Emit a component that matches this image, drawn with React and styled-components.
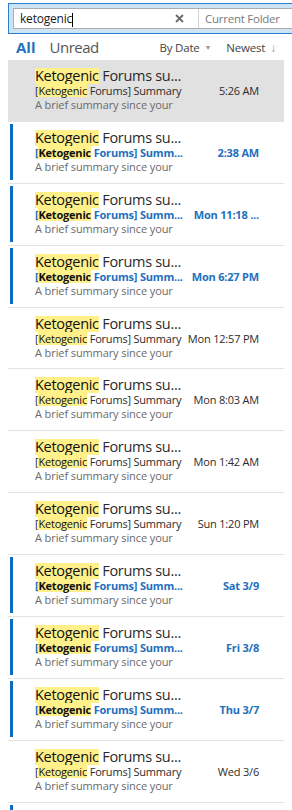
import React from "react";
import styled, { createGlobalStyle } from "styled-components";

const GlobalStyle = createGlobalStyle`
  html, body { margin: 0; padding: 0; background: #ffffff; }
  body { font-family: "Open Sans", "Noto Sans", sans-serif; }
  * { box-sizing: border-box; }
`;

const Page = styled.div`
  width: 292px;
  height: 810px;
  overflow: hidden;
  background: #fff;
`;

const SearchBar = styled.div`
  margin: 3px 0 0 8px;
  height: 31px;
  background: #cde4f7;
  border-top: 1px solid #2d7fd4;
  border-bottom: 1px solid #2d7fd4;
  border-left: 1px solid #2d7fd4;
  padding: 4px 0 0 4px;
`;

const InputBox = styled.div`
  display: flex;
  align-items: stretch;
  height: 21px;
  background: #fff;
  border: 1px solid #acacac;
  border-right: none;
`;

const Query = styled.div`
  width: 184px;
  display: flex;
  align-items: center;
  justify-content: space-between;
  padding: 0 14px 0 6px;
  font-size: 12px;
  letter-spacing: -0.2px;
  color: #1c1c1c;
`;

const Caret = styled.span`
  display: inline-block;
  width: 1px;
  height: 14px;
  background: #000;
  vertical-align: middle;
`;

const Divider = styled.div`
  width: 1px;
  background: #d4d4d4;
`;

const Scope = styled.div`
  display: flex;
  align-items: center;
  padding-left: 6px;
  font-size: 11.5px;
  letter-spacing: -0.25px;
  color: #7a7a7a;
  white-space: nowrap;
`;

const Header = styled.div`
  display: flex;
  align-items: center;
  height: 26px;
  padding: 0 16px 0 16px;
`;

const Tab = styled.span`
  font-size: 15px;
  letter-spacing: ${(p) => (p.$active ? "0" : "-0.5px")};
  font-weight: ${(p) => (p.$active ? 700 : 400)};
  color: ${(p) => (p.$active ? "#2a70c0" : "#555")};
  margin-right: 14px;
`;

const Sort = styled.span`
  display: flex;
  align-items: center;
  font-size: 11.5px;
  letter-spacing: -0.2px;
  color: #444;
  margin-left: ${(p) => p.$ml || "0"};
`;

const Glyph = styled.span`
  color: #999;
  font-size: ${(p) => p.$size || "7px"};
  margin-left: ${(p) => p.$ml || "5px"};
`;

const List = styled.div`
  margin-left: 8px;
  width: 276px;
`;

const Item = styled.div`
  display: flex;
  height: 61.9px;
  border-bottom: 1px solid #e3e3e3;
  background: ${(p) => (p.$selected ? "#e1e1e1" : "transparent")};
`;

const Mark = styled.div`
  width: 3px;
  margin: 2px 0 3px 2px;
  background: ${(p) => (p.$on ? "#0e6cc0" : "transparent")};
`;

const Content = styled.div`
  flex: 1;
  padding: 8px 25px 0 22px;
  min-width: 0;
`;

const Title = styled.div`
  font-size: 14.5px;
  letter-spacing: -0.3px;
  line-height: 16px;
  color: #2a2a2a;
  white-space: nowrap;
`;

const Hl = styled.span`
  display: inline-block;
  background: #fff08a;
  color: #111;
  font-weight: ${(p) => (p.$bold ? 700 : "inherit")};
`;

const SubRow = styled.div`
  display: flex;
  justify-content: space-between;
  gap: 4px;
  font-size: 11px;
  letter-spacing: -0.2px;
  line-height: 13px;
  white-space: nowrap;
  font-weight: ${(p) => (p.$unread ? 700 : 400)};
  color: ${(p) => (p.$unread ? "#236fbd" : "#2c2c2c")};
`;

const Preview = styled.div`
  margin-top: 1px;
  font-size: 11px;
  letter-spacing: -0.1px;
  line-height: 14px;
  color: #6a6a6a;
  white-space: nowrap;
`;

const items = [
  { time: "5:26 AM", unread: false, selected: true },
  { time: "2:38 AM", unread: true },
  { time: "Mon 11:18 ...", unread: true },
  { time: "Mon 6:27 PM", unread: true },
  { time: "Mon 12:57 PM", unread: false },
  { time: "Mon 8:03 AM", unread: false },
  { time: "Mon 1:42 AM", unread: false },
  { time: "Sun 1:20 PM", unread: false },
  { time: "Sat 3/9", unread: true },
  { time: "Fri 3/8", unread: true },
  { time: "Thu 3/7", unread: true },
  { time: "Wed 3/6", unread: false },
  { time: "Tue 3/5", unread: true },
];

export default function App() {
  return (
    <Page>
      <GlobalStyle />
      <SearchBar>
        <InputBox>
          <Query>
            <span>
              ketogenic
              <Caret />
            </span>
            <svg width="9" height="9" viewBox="0 0 9 9">
              <path d="M1 1L8 8M8 1L1 8" stroke="#6b6b6b" strokeWidth="1.8" />
            </svg>
          </Query>
          <Divider />
          <Scope>Current Folder</Scope>
        </InputBox>
      </SearchBar>
      <Header>
        <Tab $active>All</Tab>
        <Tab>Unread</Tab>
        <Sort $ml="auto">
          By Date<Glyph>▼</Glyph>
        </Sort>
        <Sort $ml="15px">
          Newest<Glyph $size="12px" $ml="5px">↓</Glyph>
        </Sort>
      </Header>
      <List>
        {items.map((it, i) => (
          <Item key={i} $selected={it.selected}>
            <Mark $on={it.unread} />
            <Content>
              <Title>
                <Hl>Ketogenic</Hl> Forums su...
              </Title>
              <SubRow $unread={it.unread}>
                <span>
                  [<Hl $bold={it.unread}>Ketogenic</Hl>
                  {it.unread ? " Forums] Summ..." : " Forums] Summary"}
                </span>
                <span>{it.time}</span>
              </SubRow>
              <Preview>A brief summary since your</Preview>
            </Content>
          </Item>
        ))}
      </List>
    </Page>
  );
}
